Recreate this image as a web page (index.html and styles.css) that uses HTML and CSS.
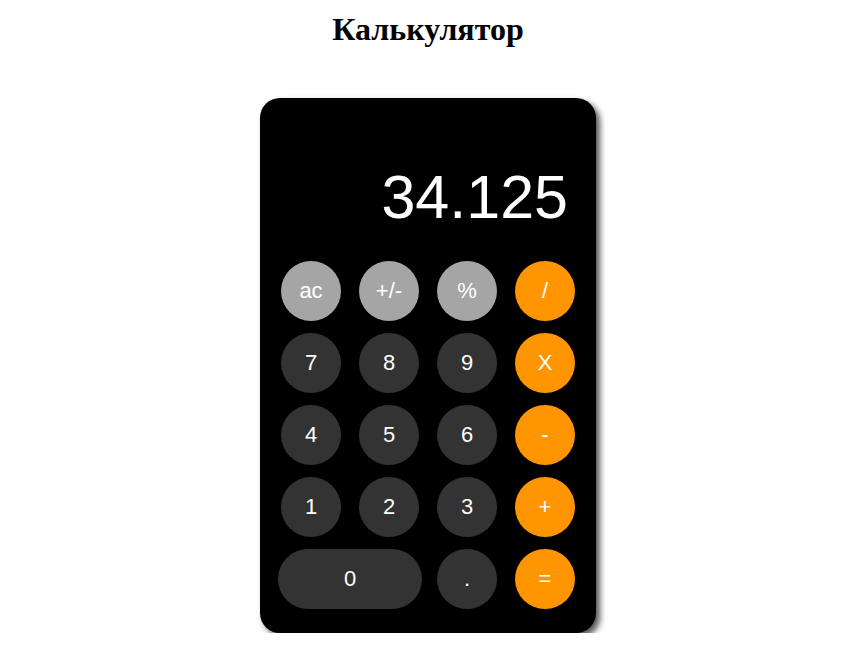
FILE: index.html
```html
<!DOCTYPE html>
<html lang="ru">
<head>
<meta charset="utf-8">
<title>Калькулятор</title>
<link rel="stylesheet" href="styles.css">
</head>
<body>
<h1 class="title">Калькулятор</h1>
<div class="calc">
  <div class="display">34.125</div>
  <div class="keys">
    <button class="key light">ac</button>
    <button class="key light">+/-</button>
    <button class="key light">%</button>
    <button class="key op">/</button>
    <button class="key">7</button>
    <button class="key">8</button>
    <button class="key">9</button>
    <button class="key op">X</button>
    <button class="key">4</button>
    <button class="key">5</button>
    <button class="key">6</button>
    <button class="key op">-</button>
    <button class="key">1</button>
    <button class="key">2</button>
    <button class="key">3</button>
    <button class="key op">+</button>
    <button class="key zero">0</button>
    <button class="key">.</button>
    <button class="key op">=</button>
  </div>
</div>
</body>
</html>
```
FILE: styles.css
```css
html, body {
  margin: 0;
  background: #fff;
}
body {
  padding: 11px 9px 0 0;
  font-family: "Liberation Serif", "Times New Roman", serif;
}
.title {
  margin: 0;
  text-align: center;
  font-size: 32px;
  font-weight: bold;
  line-height: 37px;
  color: #000;
}
.calc {
  width: 336px;
  box-sizing: border-box;
  margin: 50px auto 0;
  padding: 0 21px 24px;
  background: #000;
  border-radius: 20px;
  box-shadow: 4px 4px 6px #555;
  font-family: "Liberation Sans", Arial, sans-serif;
}
.display {
  padding: 62px 7px 0 0;
  height: 74px;
  line-height: 74px;
  font-size: 61px;
  color: #fff;
  text-align: right;
  margin-bottom: 27px;
}
.keys {
  display: grid;
  grid-template-columns: repeat(4, 60px);
  grid-auto-rows: 60px;
  column-gap: 18px;
  row-gap: 12px;
}
.key {
  border: none;
  padding: 0;
  border-radius: 30px;
  background: #333333;
  color: #fff;
  font-family: "Liberation Sans", Arial, sans-serif;
  font-size: 22px;
}
.key.light {
  background: #a5a5a5;
}
.key.op {
  background: #ff9500;
}
.key.zero {
  grid-column: span 2;
  margin: 0 -3px;
}
```
